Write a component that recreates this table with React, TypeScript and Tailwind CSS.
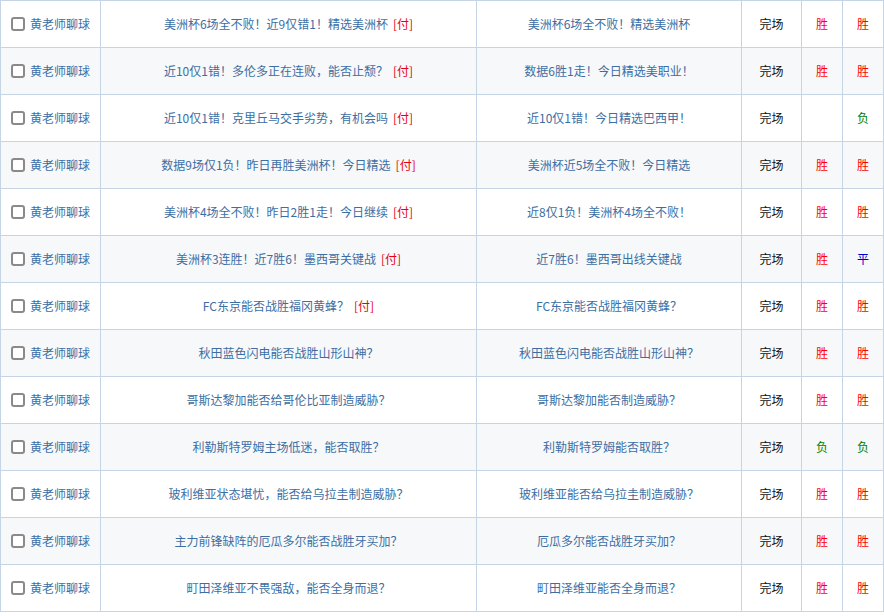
import React from "react";

type Row = {
  title: string;
  paid: boolean;
  summary: string;
  a: string;
  b: string;
};

const rows: Row[] = [
  { title: "美洲杯6场全不败！近9仅错1！精选美洲杯", paid: true, summary: "美洲杯6场全不败！精选美洲杯", a: "胜", b: "胜" },
  { title: "近10仅1错！多伦多正在连败，能否止颓？", paid: true, summary: "数据6胜1走！今日精选美职业！", a: "胜", b: "胜" },
  { title: "近10仅1错！克里丘马交手劣势，有机会吗", paid: true, summary: "近10仅1错！今日精选巴西甲！", a: "", b: "负" },
  { title: "数据9场仅1负！昨日再胜美洲杯！今日精选", paid: true, summary: "美洲杯近5场全不败！今日精选", a: "胜", b: "胜" },
  { title: "美洲杯4场全不败！昨日2胜1走！今日继续", paid: true, summary: "近8仅1负！美洲杯4场全不败！", a: "胜", b: "胜" },
  { title: "美洲杯3连胜！近7胜6！墨西哥关键战", paid: true, summary: "近7胜6！墨西哥出线关键战", a: "胜", b: "平" },
  { title: "FC东京能否战胜福冈黄蜂？", paid: true, summary: "FC东京能否战胜福冈黄蜂？", a: "胜", b: "胜" },
  { title: "秋田蓝色闪电能否战胜山形山神？", paid: false, summary: "秋田蓝色闪电能否战胜山形山神？", a: "胜", b: "胜" },
  { title: "哥斯达黎加能否给哥伦比亚制造威胁？", paid: false, summary: "哥斯达黎加能否制造威胁？", a: "胜", b: "胜" },
  { title: "利勒斯特罗姆主场低迷，能否取胜？", paid: false, summary: "利勒斯特罗姆能否取胜？", a: "负", b: "负" },
  { title: "玻利维亚状态堪忧，能否给乌拉圭制造威胁？", paid: false, summary: "玻利维亚能否给乌拉圭制造威胁？", a: "胜", b: "胜" },
  { title: "主力前锋缺阵的厄瓜多尔能否战胜牙买加？", paid: false, summary: "厄瓜多尔能否战胜牙买加？", a: "胜", b: "胜" },
  { title: "町田泽维亚不畏强敌，能否全身而退？", paid: false, summary: "町田泽维亚能否全身而退？", a: "胜", b: "胜" },
];

function resultClass(r: string) {
  if (r === "胜") return "text-[#ff0000]";
  if (r === "负") return "text-[#008000]";
  return "text-[#0000cc]";
}

const cell = "flex h-[47px] items-center justify-center border-r border-b border-[#c6d5e6]";

export default function App() {
  return (
    <div
      className="w-[884px] bg-white text-[12px] text-[#3c6ea4]"
      style={{ fontFamily: '"Microsoft YaHei", "Noto Sans CJK SC", "Noto Sans", sans-serif' }}
    >
      <div className="grid grid-cols-[100px_376px_265px_60px_41px_41px] border-t border-l border-[#c6d5e6]">
        {rows.map((row, i) => {
          const bg = i % 2 === 1 ? "bg-[#f7f8f9]" : "bg-white";
          return (
            <React.Fragment key={i}>
              <div className={`${cell} ${bg} gap-[5px]`}>
                <span className="h-[14px] w-[14px] rounded-[3px] border-2 border-[#8a8a8a] bg-white" />
                <span>黄老师聊球</span>
              </div>
              <div className={`${cell} ${bg}`}>
                <span>
                  {row.title}
                  {row.paid && <span className="ml-[5px] text-[#e60012]">[付]</span>}
                </span>
              </div>
              <div className={`${cell} ${bg}`}>{row.summary}</div>
              <div className={`${cell} ${bg} text-[#111]`}>完场</div>
              <div className={`${cell} ${bg} ${resultClass(row.a)}`}>{row.a}</div>
              <div className={`${cell} ${bg} ${resultClass(row.b)}`}>{row.b}</div>
            </React.Fragment>
          );
        })}
      </div>
    </div>
  );
}
